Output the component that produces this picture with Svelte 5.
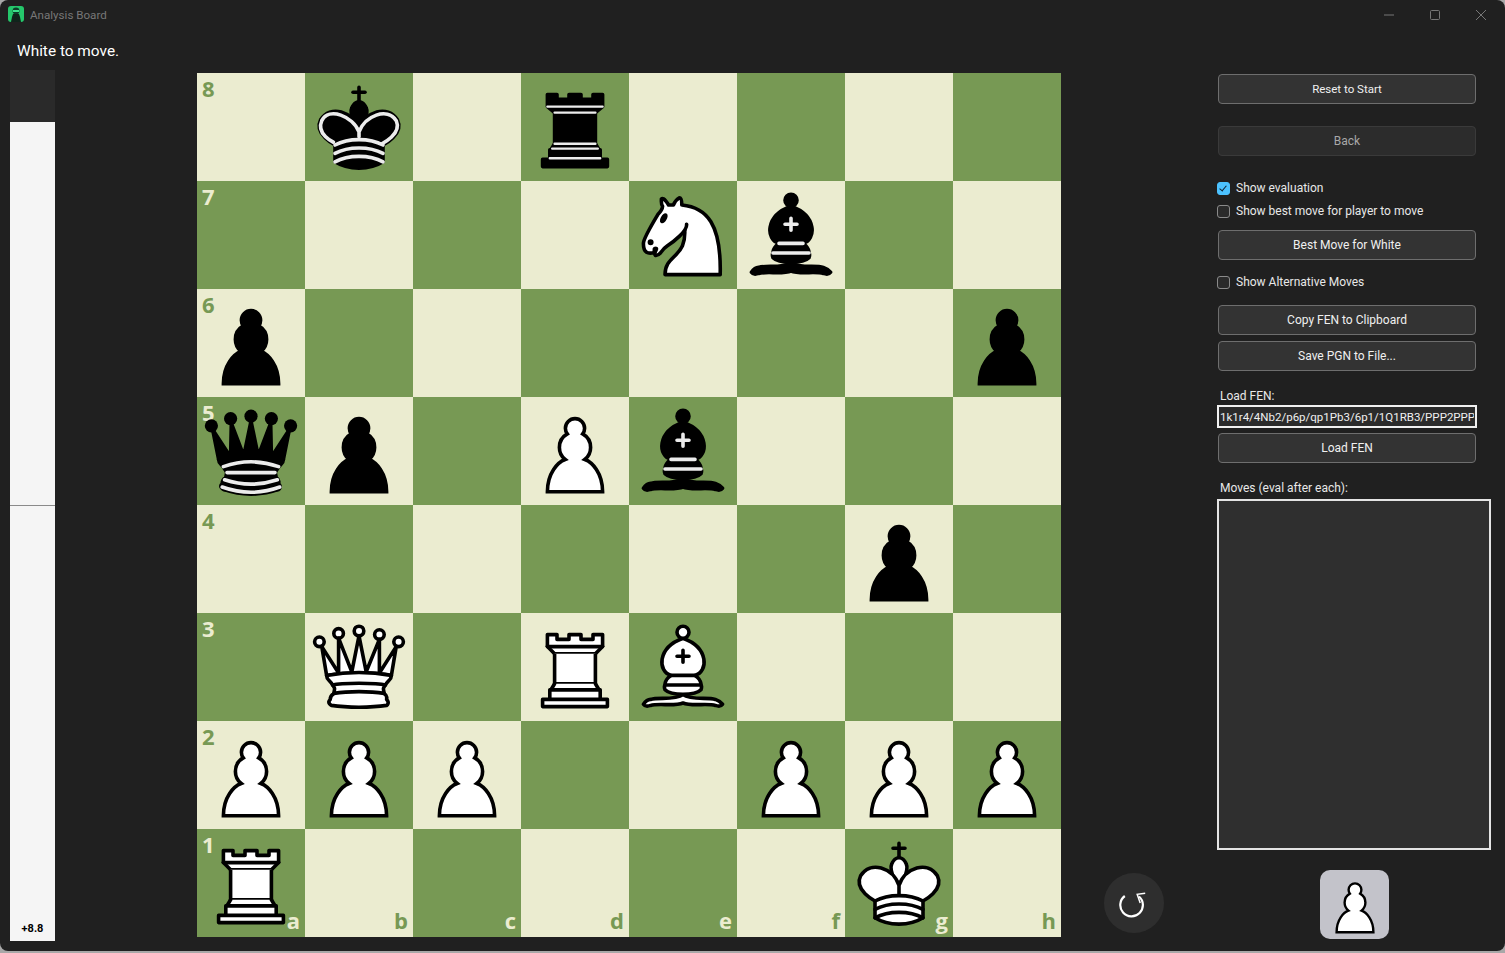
<script lang="ts">
  const fen = '1k1r4/4Nb2/p6p/qp1Pb3/6p1/1Q1RB3/PPP2PPP/R5K1';
  const files = ['a', 'b', 'c', 'd', 'e', 'f', 'g', 'h'];

  // expand the fen into 64 squares, a8 first
  const squares = fen.split('/').flatMap((row, r) => {
    const cells = [];
    for (const ch of row) {
      if (/\d/.test(ch)) {
        for (let i = 0; i < Number(ch); i++) cells.push('');
      } else {
        cells.push(ch);
      }
    }
    return cells.map((p, f) => ({
      piece: p,
      dark: (r + f) % 2 === 1,
      rank: f === 0 ? 8 - r : null,
      file: r === 7 ? files[f] : null,
    }));
  });

  const pieceId = (p: string) => (p === p.toUpperCase() ? 'w' : 'b') + p.toUpperCase();
</script>

<svg class="sprites" aria-hidden="true">
  <defs>
    <symbol id="wP" viewBox="0 0 45 45">
      <path d="M22.5 9c-2.21 0-4 1.79-4 4 0 .89.29 1.71.78 2.38C17.33 16.5 16 18.59 16 21c0 2.03.94 3.84 2.41 5.03-3 1.06-7.41 5.55-7.41 13.47h23c0-7.92-4.41-12.41-7.41-13.47 1.47-1.19 2.41-3 2.41-5.03 0-2.41-1.33-4.5-3.28-5.62.49-.67.78-1.49.78-2.38 0-2.21-1.79-4-4-4z" fill="#fff" stroke="#000" stroke-width="1.5" stroke-linecap="round"/>
    </symbol>
    <symbol id="bP" viewBox="0 0 45 45">
      <path d="M22.5 9c-2.21 0-4 1.79-4 4 0 .89.29 1.71.78 2.38C17.33 16.5 16 18.59 16 21c0 2.03.94 3.84 2.41 5.03-3 1.06-7.41 5.55-7.41 13.47h23c0-7.92-4.41-12.41-7.41-13.47 1.47-1.19 2.41-3 2.41-5.03 0-2.41-1.33-4.5-3.28-5.62.49-.67.78-1.49.78-2.38 0-2.21-1.79-4-4-4z" fill="#000" stroke="#000" stroke-width="1.5" stroke-linecap="round"/>
    </symbol>
    <symbol id="wR" viewBox="0 0 45 45">
      <g fill="#fff" fill-rule="evenodd" stroke="#000" stroke-width="1.5" stroke-linecap="round" stroke-linejoin="round">
        <path d="M9 39h27v-3H9v3zM12 36v-4h21v4H12zM11 14V9h4v2h5V9h5v2h5V9h4v5" stroke-linecap="butt"/>
        <path d="M34 14l-3 3H14l-3-3"/>
        <path d="M31 17v12.5H14V17" stroke-linecap="butt" stroke-linejoin="miter"/>
        <path d="M31 29.5l1.5 2.5h-20l1.5-2.5"/>
        <path d="M11 14h23" fill="none" stroke-linejoin="miter"/>
      </g>
    </symbol>
    <symbol id="bR" viewBox="0 0 45 45">
      <g fill-rule="evenodd" stroke="#000" stroke-width="1.5" stroke-linecap="round" stroke-linejoin="round">
        <path d="M9 39h27v-3H9v3zM12.5 32l1.5-2.5h17l1.5 2.5h-20zM12 36v-4h21v4H12z" stroke-linecap="butt"/>
        <path d="M14 29.5v-13h17v13H14z" stroke-linecap="butt" stroke-linejoin="miter"/>
        <path d="M14 16.5L11 14h23l-3 2.5H14zM11 14V9h4v2h5V9h5v2h5V9h4v5H11z" stroke-linecap="butt"/>
        <path d="M12 35.5h21M13 31.5h19M14 29.5h17M14 16.5h17M11 14h23" fill="none" stroke="#ececec" stroke-width="1" stroke-linejoin="miter"/>
      </g>
    </symbol>
    <symbol id="wK" viewBox="0 0 45 45">
      <g fill="none" fill-rule="evenodd" stroke="#000" stroke-width="1.5" stroke-linecap="round" stroke-linejoin="round">
        <path d="M22.5 11.63V6M20 8h5" stroke-linejoin="miter"/>
        <path d="M22.5 25s4.5-7.5 3-10.5c0 0-1-2.5-3-2.5s-3 2.5-3 2.5c-1.5 3 3 10.5 3 10.5" fill="#fff" stroke-linecap="butt" stroke-linejoin="miter"/>
        <path d="M12.5 37c5.5 3.5 14.5 3.5 20 0v-7s9-4.5 6-10.5c-4-6.5-13.5-3.5-16 4V27v-3.5c-2.5-7.5-12-10.5-16-4-3 6 6 10.5 6 10.5v7" fill="#fff"/>
        <path d="M12.5 30c5.5-3 14.5-3 20 0M12.5 33.5c5.5-3 14.5-3 20 0M12.5 37c5.5-3 14.5-3 20 0"/>
      </g>
    </symbol>
    <symbol id="bK" viewBox="0 0 45 45">
      <g fill="none" fill-rule="evenodd" stroke="#000" stroke-width="1.5" stroke-linecap="round" stroke-linejoin="round">
        <path d="M22.5 11.63V6" stroke-linejoin="miter"/>
        <path d="M22.5 25s4.5-7.5 3-10.5c0 0-1-2.5-3-2.5s-3 2.5-3 2.5c-1.5 3 3 10.5 3 10.5" fill="#000" stroke-linecap="butt" stroke-linejoin="miter"/>
        <path d="M12.5 37c5.5 3.5 14.5 3.5 20 0v-7s9-4.5 6-10.5c-4-6.5-13.5-3.5-16 4V27v-3.5c-2.5-7.5-12-10.5-16-4-3 6 6 10.5 6 10.5v7" fill="#000"/>
        <path d="M20 8h5" stroke-linejoin="miter"/>
        <path d="M32 29.5s8.5-4 6.03-9.65C34.15 14 25 18 22.5 24.5l.01 2.1-.01-2.1C20 18 9.906 14 6.997 19.85c-2.497 5.65 4.853 9 4.853 9" stroke="#ececec"/>
        <path d="M12.5 30c5.5-3 14.5-3 20 0m-20 3.5c5.5-3 14.5-3 20 0m-20 3.5c5.5-3 14.5-3 20 0" stroke="#ececec"/>
      </g>
    </symbol>
    <symbol id="wQ" viewBox="0 0 45 45">
      <g fill="#fff" fill-rule="evenodd" stroke="#000" stroke-width="1.5" stroke-linecap="round" stroke-linejoin="round">
        <path d="M8 12a2 2 0 1 1-4 0 2 2 0 1 1 4 0zM24.5 7.5a2 2 0 1 1-4 0 2 2 0 1 1 4 0zM41 12a2 2 0 1 1-4 0 2 2 0 1 1 4 0zM16 8.5a2 2 0 1 1-4 0 2 2 0 1 1 4 0zM33 9a2 2 0 1 1-4 0 2 2 0 1 1 4 0z"/>
        <path d="M9 26c8.5-1.5 21-1.5 27 0l2-12-7 11V11l-5.5 13.5-3-15-3 15-5.5-14V25L7 14l2 12z" stroke-linecap="butt"/>
        <path d="M9 26c0 2 1.5 2 2.5 4 1 1.5 1 1 .5 3.5-1.5 1-1.5 2.5-1.5 2.5-1.5 1.5.5 2.5.5 2.5 6.5 1 16.5 1 23 0 0 0 1.5-1 0-2.5 0 0 .5-1.5-1-2.5-.5-2.5-.5-2 .5-3.5 1-2 2.5-2 2.5-4-8.5-1.5-18.5-1.5-27 0z" stroke-linecap="butt"/>
        <path d="M11.5 30c3.5-1 18.5-1 22 0M12 33.5c6-1 15-1 21 0" fill="none"/>
      </g>
    </symbol>
    <symbol id="bQ" viewBox="0 0 45 45">
      <g fill-rule="evenodd" stroke="#000" stroke-width="1.5" stroke-linecap="round" stroke-linejoin="round">
        <g stroke="none">
          <circle cx="6" cy="12" r="2.75"/><circle cx="14" cy="9" r="2.75"/><circle cx="22.5" cy="8" r="2.75"/><circle cx="31" cy="9" r="2.75"/><circle cx="39" cy="12" r="2.75"/>
        </g>
        <path d="M9 26c8.5-1.5 21-1.5 27 0l2.5-12.5L31 25l-.3-14.1-5.2 13.6-3-14.5-3 14.5-5.2-13.6L14 25 6.5 13.5 9 26z" stroke-linecap="butt"/>
        <path d="M9 26c0 2 1.5 2 2.5 4 1 1.5 1 1 .5 3.5-1.5 1-1.5 2.5-1.5 2.5-1.5 1.5.5 2.5.5 2.5 6.5 1 16.5 1 23 0 0 0 1.5-1 0-2.5 0 0 .5-1.5-1-2.5-.5-2.5-.5-2 .5-3.5 1-2 2.5-2 2.5-4-8.5-1.5-18.5-1.5-27 0z" stroke-linecap="butt"/>
        <path d="M11 38.5a35 35 1 0 0 23 0" fill="none" stroke-linecap="butt"/>
        <path d="M11 29a35 35 1 0 1 23 0M12.5 31.5h20M11.5 34.5a35 35 1 0 0 22 0M10.5 37.5a35 35 1 0 0 24 0" fill="none" stroke="#ececec"/>
      </g>
    </symbol>
    <symbol id="wB" viewBox="0 0 45 45">
      <g fill="none" fill-rule="evenodd" stroke="#000" stroke-width="1.5" stroke-linecap="round" stroke-linejoin="round">
        <g fill="#fff" stroke-linecap="butt">
          <path d="M9 36c3.39-.97 10.11.43 13.5-2 3.39 2.43 10.11 1.03 13.5 2 0 0 1.65.54 3 2-.68.97-1.65.99-3 .5-3.39-.97-10.11.46-13.5-1-3.39 1.46-10.11.03-13.5 1-1.354.49-2.323.47-3-.5 1.354-1.94 3-2 3-2z"/>
          <path d="M15 32c2.5 2.5 12.5 2.5 15 0 .5-1.5 0-2 0-2 0-2.5-2.5-4-2.5-4 5.5-1.5 6-11.5-5-15.5-11 4-10.5 14-5 15.5 0 0-2.5 1.5-2.5 4 0 0-.5.5 0 2z"/>
          <path d="M25 8a2.5 2.5 0 1 1-5 0 2.5 2.5 0 1 1 5 0z"/>
        </g>
        <path d="M17.5 26h10M15 30h15m-7.5-14.5v5M20 18h5" stroke-linejoin="miter"/>
      </g>
    </symbol>
    <symbol id="bB" viewBox="0 0 45 45">
      <g fill="none" fill-rule="evenodd" stroke="#000" stroke-width="1.5" stroke-linecap="round" stroke-linejoin="round">
        <g fill="#000" stroke-linecap="butt">
          <path d="M9 36c3.39-.97 10.11.43 13.5-2 3.39 2.43 10.11 1.03 13.5 2 0 0 1.65.54 3 2-.68.97-1.65.99-3 .5-3.39-.97-10.11.46-13.5-1-3.39 1.46-10.11.03-13.5 1-1.354.49-2.323.47-3-.5 1.354-1.94 3-2 3-2z"/>
          <path d="M15 32c2.5 2.5 12.5 2.5 15 0 .5-1.5 0-2 0-2 0-2.5-2.5-4-2.5-4 5.5-1.5 6-11.5-5-15.5-11 4-10.5 14-5 15.5 0 0-2.5 1.5-2.5 4 0 0-.5.5 0 2z"/>
          <path d="M25 8a2.5 2.5 0 1 1-5 0 2.5 2.5 0 1 1 5 0z"/>
        </g>
        <path d="M17.5 26h10M15 30h15m-7.5-14.5v5M20 18h5" stroke="#ececec" stroke-linejoin="miter"/>
      </g>
    </symbol>
    <symbol id="wN" viewBox="0 0 45 45">
      <g fill="none" fill-rule="evenodd" stroke="#000" stroke-width="1.5" stroke-linecap="round" stroke-linejoin="round">
        <path d="M22 10c10.5 1 16.5 8 16 29H15c0-9 10-6.5 8-21" fill="#fff"/>
        <path d="M24 18c.38 2.91-5.55 7.37-8 9-3 2-2.82 4.34-5 4-1.042-.94 1.41-3.04 0-3-1 0 .19 1.23-1 2-1 0-4.003 1-4-4 0-2 6-12 6-12s1.89-1.9 2-3.5c-.73-.994-.5-2-.5-3 1-1 3 2.5 3 2.5h2s.78-1.992 2.5-3c1 0 1 3 1 3" fill="#fff"/>
        <path d="M9.5 25.5a.5.5 0 1 1-1 0 .5.5 0 1 1 1 0zm5.433-9.75a.5 1.5 30 1 1-.866-.5.5 1.5 30 1 1 .866.5z" fill="#000"/>
      </g>
    </symbol>
  </defs>
</svg>

<div class="window">
  <header class="titlebar">
    <svg class="app-icon" viewBox="0 0 16 16">
      <rect width="16" height="16" rx="3" fill="#25c76b"/>
      <circle cx="8" cy="5" r="3.4" fill="#0f3d2a"/>
      <rect x="5" y="4" width="6" height="2" fill="#3ce08a"/>
      <path d="M5 8h6l1 3 1 5H3l1-5z" fill="#10241b"/>
    </svg>
    <span class="title">Analysis Board</span>
    <div class="win-controls">
      <svg viewBox="0 0 10 10"><path d="M0 5h10"/></svg>
      <svg viewBox="0 0 10 10"><rect x=".5" y=".5" width="9" height="9" rx="1"/></svg>
      <svg viewBox="0 0 10 10"><path d="M0 0l10 10M10 0L0 10"/></svg>
    </div>
  </header>

  <div class="status">White to move.</div>

  <main class="content">
    <div class="evalbar">
      <div class="eval-black"></div>
      <div class="eval-white"><span>+8.8</span></div>
      <div class="eval-mid"></div>
    </div>

    <div class="board">
      {#each squares as sq}
        <div class="square" class:dark={sq.dark}>
          {#if sq.rank}<span class="rank">{sq.rank}</span>{/if}
          {#if sq.file}<span class="file">{sq.file}</span>{/if}
          {#if sq.piece}
            <svg class="piece"><use href={'#' + pieceId(sq.piece)}/></svg>
          {/if}
        </div>
      {/each}
    </div>

    <div class="flip-col">
      <button class="flip" aria-label="Flip board">
        <svg viewBox="0 0 30 30" width="30" height="30">
          <path d="M5.8 8A11.3 11.3 0 1 0 20 8.5" fill="none" stroke="#fff" stroke-width="2.2"/>
          <path d="M26.2 5.3l-8 1 3 8.7" fill="none" stroke="#fff" stroke-width="1.5"/>
        </svg>
      </button>
    </div>

    <aside class="panel">
      <button class="btn first">Reset to Start</button>
      <button class="btn back">Back</button>
      <label class="check checked-row"><input type="checkbox" checked /> Show evaluation</label>
      <label class="check second"><input type="checkbox" /> Show best move for player to move</label>
      <button class="btn best">Best Move for White</button>
      <label class="check alt"><input type="checkbox" /> Show Alternative Moves</label>
      <button class="btn copy">Copy FEN to Clipboard</button>
      <button class="btn save">Save PGN to File...</button>
      <div class="field-label fen-label">Load FEN:</div>
      <input class="fen" type="text" value="1k1r4/4Nb2/p6p/qp1Pb3/6p1/1Q1RB3/PPP2PPP/R5K1 w - - 0 1" />
      <button class="btn load">Load FEN</button>
      <div class="field-label moves-label">Moves (eval after each):</div>
      <div class="moves"></div>
      <div class="side-wrap">
        <button class="side" aria-label="Playing as white">
          <svg class="side-pawn"><use href="#wP"/></svg>
        </button>
      </div>
    </aside>
  </main>
</div>

<style>
  :global(body) {
    margin: 0;
    background: #a8a8a8;
    overflow: hidden;
  }
  .sprites {
    position: absolute;
    width: 0;
    height: 0;
  }
  .window {
    width: 1505px;
    height: 951px;
    background: #202020;
    border-radius: 8px;
    display: flex;
    flex-direction: column;
    font-family: Roboto, "Noto Sans", sans-serif;
    font-size: 12px;
    color: #e8e8e8;
    overflow: hidden;
  }
  .titlebar {
    height: 30px;
    display: flex;
    align-items: center;
    padding-left: 8px;
    flex: none;
  }
  .app-icon {
    width: 16px;
    height: 16px;
    margin-right: 6px;
    margin-top: -2px;
  }
  .title {
    color: #777;
    font-size: 11.6px;
  }
  .win-controls {
    margin-left: auto;
    display: flex;
    gap: 36px;
    padding-right: 19px;
  }
  .win-controls svg {
    width: 10px;
    height: 10px;
    fill: none;
    stroke: #777;
    stroke-width: 1;
  }
  .status {
    height: 40px;
    padding-left: 17px;
    padding-top: 10px;
    box-sizing: border-box;
    font-size: 15.4px;
    line-height: 22px;
    color: #fff;
    flex: none;
  }
  .content {
    flex: 1;
    display: flex;
    padding-left: 10px;
    min-height: 0;
  }
  .evalbar {
    position: relative;
    width: 45px;
    height: 871px;
    display: flex;
    flex-direction: column;
    flex: none;
  }
  .eval-black {
    height: 52px;
    background: #2a2a2a;
  }
  .eval-white {
    flex: 1;
    background: #f5f5f5;
    display: flex;
    align-items: flex-end;
    justify-content: center;
    color: #000;
    font-size: 11px;
    font-weight: 700;
    padding-bottom: 6px;
  }
  .eval-mid {
    position: absolute;
    left: 0;
    right: 0;
    top: 435px;
    height: 1px;
    background: #8a8a8a;
  }
  .board {
    width: 864px;
    height: 864px;
    margin-left: 142px;
    margin-top: 3px;
    display: grid;
    grid-template-columns: repeat(8, 108px);
    grid-template-rows: repeat(8, 108px);
    flex: none;
  }
  .square {
    position: relative;
    background: #ebecd0;
    color: #779954;
  }
  .square.dark {
    background: #779954;
    color: #ebecd0;
  }
  .rank,
  .file {
    position: absolute;
    font-family: "Open Sans", sans-serif;
    font-weight: 700;
    font-size: 22px;
    line-height: 22px;
  }
  .rank {
    left: 5px;
    top: 4px;
  }
  .file {
    right: 5px;
    bottom: 6px;
  }
  .piece {
    position: absolute;
    inset: 0;
    width: 108px;
    height: 108px;
  }
  .flip-col {
    width: 157px;
    height: 863px;
    flex: none;
    display: flex;
    align-items: flex-end;
    justify-content: center;
    padding-right: 11px;
    box-sizing: border-box;
  }
  .flip {
    width: 60px;
    height: 60px;
    padding: 0;
    border: 0;
    border-radius: 50%;
    background: #2e2e2e;
    display: flex;
    align-items: center;
    justify-content: center;
  }
  .panel {
    width: 275px;
    margin-left: -1px;
    padding-top: 4px;
    display: flex;
    flex-direction: column;
    flex: none;
  }
  .btn {
    width: 258px;
    height: 30px;
    margin-left: 1px;
    flex: none;
    background: #333;
    border: 1px solid #6e6e6e;
    border-radius: 4px;
    color: #f0f0f0;
    font-family: inherit;
    font-size: 12px;
    padding: 0 0 1px;
  }
  .btn.first {
    font-size: 11.5px;
  }
  .btn.back {
    margin-top: 22px;
    background: #2c2c2c;
    border-color: #3a3a3a;
    color: #a8a8a8;
  }
  .check {
    display: flex;
    align-items: center;
    gap: 6px;
    height: 16px;
    color: #e8e8e8;
    font-size: 12px;
  }
  .check input {
    appearance: none;
    width: 13px;
    height: 13px;
    margin: 0;
    border: 1px solid #8a8a8a;
    border-radius: 3px;
    background: #2a2a2a;
    box-sizing: border-box;
    position: relative;
    flex: none;
  }
  .check input:checked {
    background: #4cc2ff;
    border-color: #4cc2ff;
  }
  .check input:checked::after {
    content: "";
    position: absolute;
    left: 3px;
    top: 1px;
    width: 3px;
    height: 6px;
    border: solid #123;
    border-width: 0 1px 1px 0;
    transform: rotate(40deg);
  }
  .checked-row {
    margin-top: 24px;
  }
  .second {
    margin-top: 7px;
  }
  .btn.best {
    margin-top: 11px;
  }
  .alt {
    margin-top: 14px;
  }
  .btn.copy {
    margin-top: 15px;
  }
  .btn.save {
    margin-top: 6px;
  }
  .field-label {
    padding-left: 3px;
    font-size: 12px;
    line-height: 16px;
    color: #e8e8e8;
  }
  .fen-label {
    margin-top: 17px;
  }
  .fen {
    width: 260px;
    height: 23px;
    margin-top: 1px;
    box-sizing: border-box;
    background: #2b2b2b;
    border: 2px solid #f0f0f0;
    color: #f0f0f0;
    font-family: inherit;
    font-size: 11.5px;
    padding: 0 1px;
    outline: none;
    flex: none;
  }
  .btn.load {
    margin-top: 5px;
  }
  .moves-label {
    margin-top: 17px;
  }
  .moves {
    width: 274px;
    height: 351px;
    margin-top: 3px;
    box-sizing: border-box;
    background: #2f2f2f;
    border: 2px solid #e4e4e4;
    flex: none;
  }
  .side-wrap {
    display: flex;
    justify-content: center;
    margin-top: 20px;
  }
  .side {
    width: 69px;
    height: 69px;
    padding: 0;
    border: 0;
    border-radius: 10px;
    background: #c3c3ca;
    display: flex;
    align-items: center;
    justify-content: center;
    overflow: visible;
  }
  .side-pawn {
    width: 72px;
    height: 72px;
    flex: none;
  }
</style>
